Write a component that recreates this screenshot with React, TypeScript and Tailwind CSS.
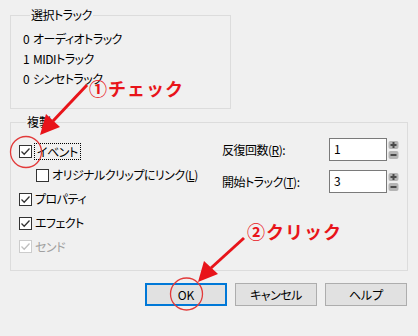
import React from "react";

const Check = ({ checked, disabled }: { checked: boolean; disabled?: boolean }) => (
  <div
    className={`w-[13px] h-[13px] border bg-white flex items-center justify-center shrink-0 ${
      disabled ? "border-[#cccccc]" : "border-[#333333]"
    }`}
  >
    {checked && (
      <svg width="11" height="11" viewBox="0 0 11 11">
        <path
          d="M1.5 5.5 L4.2 8.2 L9.5 2.5"
          fill="none"
          stroke={disabled ? "#bfbfbf" : "#333333"}
          strokeWidth="1.3"
        />
      </svg>
    )}
  </div>
);

const Spin = () => (
  <svg width="11" height="22" viewBox="0 0 11 22" className="ml-[1px]">
    <rect x="0.5" y="2" width="10" height="8" rx="2" fill="#b5b5b5" />
    <path d="M5.5 3 V9 M2.5 6 H8.5" stroke="#4a4a4a" strokeWidth="2" />
    <rect x="0.5" y="12" width="10" height="8" rx="2" fill="#b5b5b5" />
    <path d="M2.5 16 H8.5" stroke="#4a4a4a" strokeWidth="2" />
  </svg>
);

export default function App() {
  return (
    <div
      className="relative w-[418px] h-[336px] bg-[#f0f0f0] text-[12px] text-black overflow-hidden whitespace-nowrap [font-feature-settings:'palt']"
      style={{ fontFamily: '"Noto Sans CJK JP", "Noto Sans", sans-serif' }}
    >
      <div className="pt-[7px] pl-[10px]">
        <fieldset className="w-[221px] border border-[#dcdcdc] pl-[12px] pb-[19px]">
          <legend className="ml-[7px] px-[1px] leading-[16px] tracking-[-0.5px]">選択トラック</legend>
          <div className="pt-[6px] leading-[20px] tracking-[-0.5px]">
            <div>
              <span className="inline-block w-[10px]">0</span>オーディオトラック
            </div>
            <div>
              <span className="inline-block w-[10px]">1</span>MIDIトラック
            </div>
            <div>
              <span className="inline-block w-[10px]">0</span>シンセトラック
            </div>
          </div>
        </fieldset>

        <fieldset className="mt-[5px] w-[398px] border border-[#dcdcdc] pl-[8px] pb-[12px]">
          <legend className="ml-[7px] px-[1px] leading-[16px]">複製</legend>
          <div className="flex tracking-[-0.5px]">
            <div className="w-[203px] pt-[9px]">
              <div className="h-[24px] flex items-center">
                <Check checked />
                <span className="ml-[2px] px-[2px] leading-[15px] border border-dotted border-black">
                  イベント
                </span>
              </div>
              <div className="h-[24px] flex items-center pl-[17px]">
                <Check checked={false} />
                <span className="ml-[3px]">
                  オリジナルクリップにリンク(<span className="underline">L</span>)
                </span>
              </div>
              <div className="h-[24px] flex items-center">
                <Check checked />
                <span className="ml-[3px]">プロパティ</span>
              </div>
              <div className="h-[24px] flex items-center">
                <Check checked />
                <span className="ml-[3px]">エフェクト</span>
              </div>
              <div className="h-[23px] flex items-center text-[#a0a0a0]">
                <Check checked disabled />
                <span className="ml-[3px]">センド</span>
              </div>
            </div>
            <div className="pt-[8px] flex flex-col gap-[9px]">
              <div className="flex items-center">
                <div className="w-[107px]">
                  反復回数(<span className="underline">R</span>):
                </div>
                <div className="w-[58px] h-[23px] bg-white border border-[#7a7a7a] pl-[4px] leading-[19px]">
                  1
                </div>
                <Spin />
              </div>
              <div className="flex items-center">
                <div className="w-[107px]">
                  開始トラック(<span className="underline">T</span>):
                </div>
                <div className="w-[58px] h-[23px] bg-white border border-[#7a7a7a] pl-[4px] leading-[19px]">
                  3
                </div>
                <Spin />
              </div>
            </div>
          </div>
        </fieldset>

        <div className="mt-[12px] flex gap-[8px] pl-[135px]">
          <button className="w-[82px] h-[23px] bg-[#e1e1e1] border-2 border-[#0078d7] flex items-center justify-center">
            OK
          </button>
          <button className="w-[82px] h-[23px] bg-[#e1e1e1] border border-[#adadad] flex items-center justify-center tracking-[-0.5px]">
            キャンセル
          </button>
          <button className="w-[82px] h-[23px] bg-[#e1e1e1] border border-[#adadad] flex items-center justify-center">
            ヘルプ
          </button>
        </div>
      </div>

      {/* annotations */}
      <div className="absolute left-[89px] top-[76px] text-[18px] font-bold text-[#e8141a] leading-[24px] tracking-[1px] [font-feature-settings:normal]">
        ①チェック
      </div>
      <div className="absolute left-[247px] top-[219px] text-[18px] font-bold text-[#e8141a] leading-[24px] tracking-[1px] [font-feature-settings:normal]">
        ②クリック
      </div>
      <svg className="absolute left-0 top-0 pointer-events-none" width="418" height="336">
        <circle cx="26" cy="152" r="15.5" fill="none" stroke="#e23a3a" strokeWidth="1.3" />
        <circle cx="186.5" cy="294" r="16" fill="none" stroke="#e23a3a" strokeWidth="1.3" />
        <line x1="87" y1="85" x2="53" y2="121" stroke="#e8141a" strokeWidth="3" />
        <polygon points="40,135 46,114 60,127" fill="#e8141a" />
        <line x1="244" y1="238" x2="211" y2="268" stroke="#e8141a" strokeWidth="3" />
        <polygon points="198,282 204,261 218,274" fill="#e8141a" />
      </svg>
    </div>
  );
}
